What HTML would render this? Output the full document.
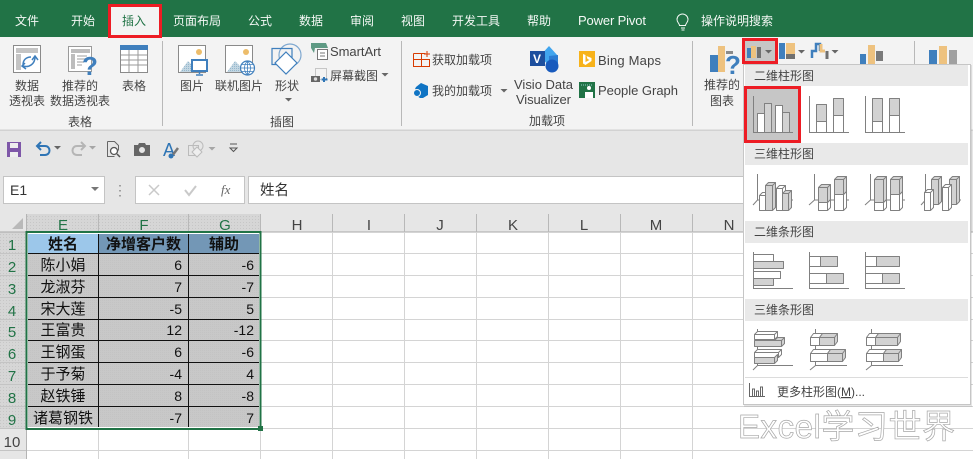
<!DOCTYPE html>
<html><head><meta charset="utf-8"><style>
html,body{margin:0;padding:0;background:#fff;width:973px;height:459px;overflow:hidden}
svg{display:block}
text{font-family:"Liberation Sans","Noto Sans CJK SC",sans-serif;font-size:12px;fill:#444}
.l{font-size:13px}
.c{font-size:15px;fill:#111;text-anchor:middle}
.b{font-weight:bold}
.n{font-size:14px;fill:#111;text-anchor:end}
.h{font-size:15px;fill:#444;text-anchor:middle}
.r{font-size:15px;fill:#217346;text-anchor:middle}
.w{fill:#f4f8f5}
.g{fill:#d2d2d2;stroke:#808080;stroke-width:1;stroke-linejoin:round}
.f{fill:#fff;stroke:#808080;stroke-width:1;stroke-linejoin:round}
.a{fill:none;stroke:#808080;stroke-width:1}
</style></head><body>
<svg width="973" height="459" viewBox="0 0 973 459" xmlns="http://www.w3.org/2000/svg">
<defs>
<pattern id="dot" width="3" height="3" patternUnits="userSpaceOnUse"><rect width="3" height="3" fill="#d6d6d6"/><rect width="1" height="1" fill="#c6c6c6"/></pattern>
<pattern id="cell" width="2" height="2" patternUnits="userSpaceOnUse"><rect width="2" height="2" fill="#c8c8c8"/><rect width="1" height="1" fill="#c3c3c3"/></pattern>
<pattern id="mt" width="2" height="2" patternUnits="userSpaceOnUse"><rect width="2" height="2" fill="#c3d6e2"/><rect width="1" height="1" fill="#95b8cd"/></pattern>
<path id="arr" d="M-3.500 0h7l-3.500 3.500z" fill="#666"/>
</defs>

<!-- base -->
<rect width="973" height="459" fill="#fff"/>
<rect y="130" width="973" height="102" fill="#e6e6e6"/>
<rect y="37" width="973" height="93" fill="#f3f3f3"/>
<rect y="129.500" width="973" height="1.500" fill="#d2d2d2"/>
<rect width="973" height="37" fill="#217346"/>

<!-- tabs -->
<rect x="109.500" y="5.500" width="51" height="31" fill="#f3f3f3" stroke="#ed1c24" stroke-width="3"/>
<text class="w" x="15" y="25">文件</text>
<text class="w" x="71" y="25">开始</text>
<text x="122" y="25" style="fill:#217346">插入</text>
<text class="w" x="173" y="25">页面布局</text>
<text class="w" x="248" y="25">公式</text>
<text class="w" x="299" y="25">数据</text>
<text class="w" x="350" y="25">审阅</text>
<text class="w" x="401" y="25">视图</text>
<text class="w" x="452" y="25">开发工具</text>
<text class="w" x="527" y="25">帮助</text>
<text class="w l" x="578" y="25" textLength="68">Power Pivot</text>
<text class="w" x="701" y="25">操作说明搜索</text>
<path d="M681 28h4M681.500 30h3M679.500 25.500c0-2-2.500-3-2.500-6a5.500 5.500 0 0 1 11 0c0 3-2.500 4-2.500 6z" fill="none" stroke="#f4f8f5" stroke-width="1"/>

<!-- ribbon labels -->
<text x="15" y="90">数据</text><text x="9" y="105">透视表</text>
<text x="62" y="90">推荐的</text><text x="50" y="105">数据透视表</text>
<text x="122" y="90">表格</text><text x="68" y="126">表格</text>
<rect x="162" y="41" width="1" height="85" fill="#b8b8b8"/>
<text x="180" y="90">图片</text><text x="215" y="90">联机图片</text><text x="275" y="90">形状</text>
<use href="#arr" x="288.500" y="98"/>
<text x="270" y="126">插图</text>
<text class="l" x="330" y="56" textLength="51">SmartArt</text>
<text x="330" y="80">屏幕截图</text><use href="#arr" x="385" y="73"/>
<rect x="401" y="41" width="1" height="85" fill="#b8b8b8"/>
<text x="432" y="64">获取加载项</text><text x="432" y="95">我的加载项</text><use href="#arr" x="504" y="89"/>
<text class="l" x="514" y="89" textLength="59">Visio Data</text><text class="l" x="516" y="104" textLength="55">Visualizer</text>
<text class="l" x="598" y="65" textLength="63">Bing Maps</text><text class="l" x="598" y="95" textLength="80">People Graph</text>
<text x="529" y="125">加载项</text>
<rect x="692" y="41" width="1" height="85" fill="#b8b8b8"/>
<text x="704" y="89">推荐的</text><text x="710" y="105">图表</text>

<!-- pivot icon -->
<rect x="13.500" y="45.500" width="27" height="27" fill="#fff" stroke="#8a8a8a"/>
<rect x="16" y="48" width="22" height="5" fill="#c4c4c4"/><rect x="16" y="54" width="5" height="16" fill="#c4c4c4"/>
<path d="M23 66c6 2 12-2 12-9M32 60l3-4 3 4M25 63l-3 3 4 3M23 65c0-5 3-8 8-8" fill="none" stroke="#3f7fbd" stroke-width="1.500"/>
<!-- recommended pivot -->
<rect x="68.500" y="46.500" width="23" height="25" fill="#fff" stroke="#9a9a9a"/>
<rect x="71" y="49" width="19" height="4" fill="#bdbdbd"/><rect x="71" y="54" width="4" height="15" fill="#bdbdbd"/>
<path d="M77 56h10M77 59h10M77 62h7M77 65h5" stroke="#bdbdbd" stroke-width="1.500"/>
<text x="82" y="75" style="font-size:26px;font-weight:bold;fill:#3f7fbd">?</text>
<!-- table icon -->
<rect x="120.500" y="45.500" width="27" height="27" fill="#fff" stroke="#8a8a8a"/>
<rect x="120" y="45" width="28" height="5" fill="#3f7fbd"/>
<path d="M121 55h26M121 60h26M121 65h26M129 50v22M138 50v22" stroke="#9a9a9a"/>
<!-- picture -->
<rect x="178.500" y="45.500" width="27" height="27" fill="#fff" stroke="#8a8a8a"/>
<circle cx="199" cy="52" r="3" fill="#edbd6b"/>
<path d="M180 72l8-11 5 5 3 6z" fill="url(#mt)"/>
<rect x="192" y="60" width="15" height="11" fill="#fff" stroke="#3f7fbd" stroke-width="2"/>
<path d="M199.500 71v3M196 75h7" stroke="#3f7fbd" stroke-width="1.500"/>
<!-- online -->
<rect x="225.500" y="45.500" width="27" height="27" fill="#fff" stroke="#8a8a8a"/>
<circle cx="246" cy="52" r="3" fill="#edbd6b"/>
<path d="M227 72l8-11 5 5 3 6z" fill="url(#mt)"/>
<circle cx="247.500" cy="68" r="7" fill="#fff" stroke="#3f7fbd" stroke-width="1.200"/>
<path d="M240.500 68h14M241.500 64.500h12M241.500 71.500h12M247.500 61v14M247.500 61c-4 4-4 10 0 14M247.500 61c4 4 4 10 0 14" fill="none" stroke="#3f7fbd" stroke-width=".8"/>
<!-- shapes -->
<circle cx="290" cy="55" r="11" fill="none" stroke="#7fa8d0" stroke-width="1.200"/>
<path d="M272 48.500h20v16h-20z" fill="none" stroke="#3f7fbd" stroke-width="1.200"/>
<path d="M286 52l11 11-11 11-11-11z" fill="#fff" stroke="#3f7fbd" stroke-width="1.200"/>
<!-- smartart -->
<path d="M311 43h15l2 5h-13l-1 5-3-5z" fill="#5f9a84"/>
<rect x="317.500" y="49.500" width="10" height="10" fill="#fff" stroke="#777"/><path d="M320 53h5M320 56h5" stroke="#777"/>
<!-- screenshot -->
<rect x="315.500" y="68.500" width="11" height="11" fill="none" stroke="#999" stroke-dasharray="1 1"/>
<rect x="311" y="76" width="9" height="6" fill="#666"/><circle cx="315.500" cy="79" r="1.700" fill="#ddd"/>
<path d="M324 77v5M321.500 79.500h6" stroke="#2f75b5" stroke-width="2"/>
<!-- get addins -->
<path d="M413.500 53.500h12M413.500 53.500v13h16v-7h-16M421.500 53.500v13" fill="none" stroke="#d83b01"/>
<path d="M427 51v6M424 54h6" stroke="#d83b01"/>
<!-- my addins -->
<path d="M421 83l7 3v9l-5 3h-3l-3-2v-6l-2-1 1-2z" fill="#0f74c4"/><circle cx="417" cy="93" r="3.500" fill="#0f74c4" stroke="#f3f3f3"/>
<!-- visio -->
<path d="M549 46l9 10-9 10-9-10z" fill="#41a5ee"/><path d="M549 56l9-1v9h-9z" fill="#2b7cd3"/>
<circle cx="552" cy="66" r="6.500" fill="#185abd"/>
<rect x="530" y="51" width="15" height="15" fill="#1d4f9e"/>
<text x="533" y="63" style="font-size:12px;font-weight:bold;fill:#fff">V</text>
<!-- bing -->
<rect x="579" y="51" width="16" height="16" fill="#f7b21a"/>
<path d="M583 54l2.500 1v7l4-2-2-1-1-3 5 2v3l-6 4-2.500-1.500z" fill="#fff"/>
<!-- people graph -->
<rect x="579" y="82" width="16" height="16" fill="#217346"/>
<circle cx="589" cy="88" r="2" fill="#fff"/><path d="M585 98v-6h8v6z" fill="#fff"/><path d="M581 85h12" stroke="#9cc" stroke-dasharray="1 1"/>
<!-- recommended chart -->
<rect x="710" y="55" width="8" height="17" fill="#3f7fbd"/>
<rect x="718" y="46" width="7" height="26" fill="#eec27f"/>
<rect x="726" y="51" width="7" height="3" fill="#8a8a8a"/>
<text x="725" y="74" style="font-size:26px;font-weight:bold;fill:#3f7fbd">?</text>

<!-- top chart group -->
<rect x="743.500" y="39.500" width="33" height="23" fill="#c6c6c6" stroke="#ed1c24" stroke-width="3"/>
<rect x="747" y="48" width="4" height="10" fill="#3f7fbd"/><rect x="751" y="46" width="5" height="12" fill="#eec27f"/><rect x="757" y="47" width="4" height="11" fill="#707070"/>
<use href="#arr" x="768.500" y="50"/>
<rect x="779" y="43" width="6" height="16" fill="#3f7fbd"/><rect x="786" y="43" width="9" height="11" fill="#eec27f"/><rect x="786" y="54" width="9" height="5" fill="#707070"/>
<use href="#arr" x="801.500" y="50"/>
<path d="M812 58v-7h4v-7h4v7" fill="none" stroke="#3f7fbd" stroke-width="2.500"/><path d="M821 44v7h4" fill="none" stroke="#eec27f" stroke-width="3"/><path d="M827 51v8" stroke="#707070" stroke-width="3"/>
<use href="#arr" x="835" y="50"/>
<rect x="860" y="54" width="6" height="12" fill="#3f7fbd"/><rect x="868" y="45" width="7" height="21" fill="#eec27f"/><rect x="876" y="51" width="7" height="10" fill="#7a7a7a"/>
<rect x="914" y="41" width="1" height="85" fill="#b8b8b8"/>
<rect x="929" y="50" width="8" height="18" fill="#3f7fbd"/><rect x="939" y="46" width="8" height="22" fill="#eec27f"/><rect x="949" y="50" width="8" height="18" fill="#a0a0a0"/>

<!-- QAT -->
<rect x="7" y="142" width="14" height="15" fill="#7e57a8"/><rect x="10" y="143" width="8" height="5" fill="#eee"/><rect x="10" y="152" width="8" height="5" fill="#eee"/>
<path d="M37 146h8c6 0 6 9 0 9h-5M41 142l-4 4 4 4" fill="none" stroke="#2f75b5" stroke-width="2"/>
<use href="#arr" x="57.500" y="146"/>
<path d="M85 146h-8c-6 0-6 9 0 9h5M81 142l4 4-4 4" fill="none" stroke="#b5b5b5" stroke-width="2"/>
<use href="#arr" x="92.500" y="146" style="opacity:.5"/>
<path d="M107.500 141.500h7l4 4v5M107.500 141.500v15h7" fill="none" stroke="#666"/><circle cx="114" cy="151" r="3.500" fill="#fff" stroke="#555" stroke-width="1.300"/><path d="M117 154l3 3" stroke="#555" stroke-width="1.500"/>
<path d="M134 145h4l1-2h6l1 2h4v11h-16z" fill="#666"/><circle cx="142" cy="150" r="3.500" fill="#e6e6e6" stroke="#666"/>
<text x="163" y="156" style="font-size:18px;fill:#2f75b5">A</text><path d="M172 156l6-8" stroke="#777" stroke-width="2.500"/><circle cx="171" cy="156" r="2.500" fill="#2f75b5"/>
<rect x="188.500" y="145.500" width="10" height="10" fill="none" stroke="#bbb"/><circle cx="198" cy="146" r="5" fill="none" stroke="#bbb"/><path d="M197 147l5 5-5 5-5-5z" fill="#eee" stroke="#bbb"/>
<use href="#arr" x="212" y="147" style="opacity:.5"/>
<path d="M230 144h7M230 148h7l-3.500 3.500z" fill="none" stroke="#555"/>

<!-- formula bar -->
<rect x="3.500" y="176.500" width="101" height="27" fill="#fff" stroke="#c4c4c4"/>
<text x="10" y="195" style="font-size:14px;fill:#333">E1</text>
<path d="M91 187h8l-4 4z" fill="#777"/>
<path d="M120 185v1.500M120 190v1.500M120 195v1.500" stroke="#888" stroke-width="1.500"/>
<rect x="135.500" y="176.500" width="109" height="27" fill="#fff" stroke="#c4c4c4"/>
<path d="M149 185l10 10M159 185l-10 10" stroke="#c9c9c9" stroke-width="1.500"/>
<path d="M185 190l4 5 7-9" fill="none" stroke="#c9c9c9" stroke-width="2"/>
<text x="221" y="194" style="font-family:'Liberation Serif',serif;font-style:italic;font-size:13px;fill:#666">fx</text>
<rect x="248.500" y="176.500" width="500" height="27" fill="#fff" stroke="#c4c4c4"/>
<text x="260" y="195" style="font-size:14.500px;fill:#333">姓名</text>

<!-- sheet headers -->
<rect x="0" y="214" width="973" height="18" fill="#e6e6e6"/>
<rect x="27" y="214" width="234" height="18" fill="url(#dot)"/>
<rect x="0" y="232" width="26" height="197" fill="url(#dot)"/>
<rect x="0" y="429" width="26" height="30" fill="#e6e6e6"/>
<rect y="231.500" width="973" height="1" fill="#a8a8a8"/>
<rect x="26" y="214" width="1" height="245" fill="#b4b4b4"/>
<path d="M98.500 214v18M188.500 214v18M260.500 214v18M332.500 214v18M404.500 214v18M476.500 214v18M548.500 214v18M620.500 214v18M692.500 214v18" stroke="#b8b8b8"/>
<path d="M23 218v11h-11z" fill="#b9b9b9"/>
<text class="r" x="63" y="230">E</text><text class="r" x="144" y="230">F</text><text class="r" x="225" y="230">G</text>
<text class="h" x="297" y="230">H</text><text class="h" x="369" y="230">I</text><text class="h" x="440" y="230">J</text><text class="h" x="513" y="230">K</text><text class="h" x="584" y="230">L</text><text class="h" x="656" y="230">M</text><text class="h" x="729" y="230">N</text>

<!-- grid -->
<path d="M261 253.500H973M261 275.500H973M261 297.500H973M261 319.500H973M261 340.500H973M261 362.500H973M261 384.500H973M261 406.500H973M261 428.500H973M27 450.500H973M98.500 430V459M188.500 430V459M260.500 430V459M332.500 232V459M404.500 232V459M476.500 232V459M548.500 232V459M620.500 232V459M692.500 232V459" stroke="#d4d4d4"/>
<path d="M0 253.500H26M0 275.500H26M0 297.500H26M0 319.500H26M0 340.500H26M0 362.500H26M0 384.500H26M0 406.500H26M0 428.500H26M0 450.500H26" stroke="#c4c4c4"/>

<!-- table -->
<rect x="28" y="234" width="231" height="194" fill="#fff"/>
<rect x="28" y="234" width="70" height="19" fill="#9cc7ea"/>
<rect x="99" y="234" width="160" height="19" fill="#7397b6"/>
<rect x="28" y="254" width="231" height="173" fill="url(#cell)"/>
<path d="M28 253.500H259M28 275.500H259M28 297.500H259M28 319.500H259M28 340.500H259M28 362.500H259M28 384.500H259M28 406.500H259M98.500 234V427M188.500 234V427" stroke="#111"/>
<text class="c b" x="63" y="249">姓名</text><text class="c b" x="143.500" y="249">净增客户数</text><text class="c b" x="224" y="249">辅助</text>
<text class="c" x="63" y="270">陈小娟</text><text class="n" x="182" y="270">6</text><text class="n" x="254" y="270">-6</text>
<text class="c" x="63" y="292">龙淑芬</text><text class="n" x="182" y="292">7</text><text class="n" x="254" y="292">-7</text>
<text class="c" x="63" y="314">宋大莲</text><text class="n" x="182" y="314">-5</text><text class="n" x="254" y="314">5</text>
<text class="c" x="63" y="335">王富贵</text><text class="n" x="182" y="335">12</text><text class="n" x="254" y="335">-12</text>
<text class="c" x="63" y="357">王钢蛋</text><text class="n" x="182" y="357">6</text><text class="n" x="254" y="357">-6</text>
<text class="c" x="63" y="379">于予菊</text><text class="n" x="182" y="379">-4</text><text class="n" x="254" y="379">4</text>
<text class="c" x="63" y="401">赵铁锤</text><text class="n" x="182" y="401">8</text><text class="n" x="254" y="401">-8</text>
<text class="c" x="63" y="423">诸葛钢铁</text><text class="n" x="182" y="423">-7</text><text class="n" x="254" y="423">7</text>
<rect x="26.500" y="232" width="234" height="197" fill="none" stroke="#217346" stroke-width="2"/>
<rect x="258" y="426" width="5" height="5" fill="#217346"/>
<text class="r" x="12" y="250">1</text><text class="r" x="12" y="272">2</text><text class="r" x="12" y="294">3</text><text class="r" x="12" y="316">4</text><text class="r" x="12" y="337">5</text><text class="r" x="12" y="359">6</text><text class="r" x="12" y="381">7</text><text class="r" x="12" y="403">8</text><text class="r" x="12" y="425">9</text>
<text class="h" x="12" y="447">10</text>

<!-- watermark -->
<text x="738" y="438" textLength="217" style="font-size:33px;fill:#fff;stroke:#a8a8a8;stroke-width:.7">Excel学习世界</text>

<!-- menu -->
<rect x="744" y="65" width="228" height="342" fill="#999" opacity=".25"/>
<rect x="743.500" y="64.500" width="227" height="340" fill="#fff" stroke="#c6c6c6"/>
<rect x="745" y="65" width="223" height="21" fill="#e9e9e9"/>
<rect x="745" y="143" width="223" height="22" fill="#e9e9e9"/>
<rect x="745" y="221" width="223" height="22" fill="#e9e9e9"/>
<rect x="745" y="299" width="223" height="22" fill="#e9e9e9"/>
<text x="754" y="80">二维柱形图</text><text x="754" y="158">三维柱形图</text><text x="754" y="236">二维条形图</text><text x="754" y="314">三维条形图</text>
<rect x="745.500" y="87.500" width="54" height="54" fill="#c6c6c6" stroke="#ed1c24" stroke-width="3"/>

<!-- 2D columns -->
<path class="a" d="M753.500 96v36.500H793"/>
<rect class="f" x="757.500" y="113.500" width="7" height="19"/><rect class="g" x="764.500" y="103.500" width="7" height="29"/><rect class="f" x="775.500" y="105.500" width="7" height="27"/><rect class="g" x="782.500" y="112.500" width="7" height="20"/>
<path class="a" d="M809.500 96v36.500H849"/>
<rect class="f" x="816.500" y="121.500" width="10" height="11"/><rect class="g" x="816.500" y="104.500" width="10" height="17"/><rect class="f" x="833.500" y="115.500" width="10" height="17"/><rect class="g" x="833.500" y="98.500" width="10" height="17"/>
<path class="a" d="M865.500 96v36.500H905"/>
<rect class="f" x="872.500" y="121.500" width="10" height="11"/><rect class="g" x="872.500" y="98.500" width="10" height="23"/><rect class="f" x="889.500" y="115.500" width="10" height="17"/><rect class="g" x="889.500" y="98.500" width="10" height="17"/>

<!-- 3D columns -->
<path class="a" d="M757.500 174v26M753 205l4.500-5H793"/>
<path class="f" d="M759.500 195.500h6v15h-6zM759.500 195.500l3-3h6l-3 3zM765.500 195.500l3-3v15l-3 3z"/>
<path class="g" d="M765.500 185.500h7v25h-7zM765.500 185.500l3-3h7l-3 3zM772.500 185.500l3-3v25l-3 3z"/>
<path class="f" d="M776.500 188.500h6v22h-6zM776.500 188.500l3-3h6l-3 3zM782.500 188.500l3-3v22l-3 3z"/>
<path class="g" d="M782.500 193.500h6v17h-6zM782.500 193.500l3-3h6l-3 3zM788.500 193.500l3-3v17l-3 3z"/>

<path class="a" d="M814.500 174v26M809 205l5.500-5H849"/>
<path class="f" d="M818.500 202.500h9v8h-9zM827.500 202.500l3-3v8l-3 3z"/>
<path class="g" d="M818.500 187.500h9v15h-9zM818.500 187.500l3-3h9l-3 3zM827.500 187.500l3-3v15l-3 3z"/>
<path class="f" d="M834.500 194.500h9v16h-9zM843.500 194.500l3-3v16l-3 3z"/>
<path class="g" d="M834.500 179.500h9v15h-9zM834.500 179.500l3-3h9l-3 3zM843.500 179.500l3-3v15l-3 3z"/>

<path class="a" d="M870.500 174v26M865 205l5.500-5H905"/>
<path class="f" d="M874.500 202.500h9v8h-9zM883.500 202.500l3-3v8l-3 3z"/>
<path class="g" d="M874.500 179.500h9v23h-9zM874.500 179.500l3-3h9l-3 3zM883.500 179.500l3-3v23l-3 3z"/>
<path class="f" d="M890.500 194.500h9v16h-9zM899.500 194.500l3-3v16l-3 3z"/>
<path class="g" d="M890.500 179.500h9v15h-9zM890.500 179.500l3-3h9l-3 3zM899.500 179.500l3-3v15l-3 3z"/>

<path class="a" d="M925.500 174v26M921 205l4.500-5H961"/>
<path class="g" d="M931.500 179.500h7v25h-7zM931.500 179.500l3-3h7l-3 3zM938.500 179.500l3-3v25l-3 3z"/>
<path class="f" d="M924.500 192.500h6v18h-6zM924.500 192.500l3-3h6l-3 3zM930.500 192.500l3-3v18l-3 3z"/>
<path class="g" d="M949.500 179.500h7v25h-7zM949.500 179.500l3-3h7l-3 3zM956.500 179.500l3-3v25l-3 3z"/>
<path class="f" d="M942.500 187.500h6v23h-6zM942.500 187.500l3-3h6l-3 3zM948.500 187.500l3-3v23l-3 3z"/>

<!-- 2D bars -->
<path class="a" d="M753.500 252v36.500H793"/>
<rect class="f" x="753.500" y="254.500" width="20" height="7"/><rect class="g" x="753.500" y="261.500" width="30" height="7"/><rect class="f" x="753.500" y="271.500" width="27" height="7"/><rect class="g" x="753.500" y="278.500" width="20" height="7"/>
<path class="a" d="M809.500 252v36.500H849"/>
<rect class="f" x="809.500" y="256.500" width="11" height="10"/><rect class="g" x="820.500" y="256.500" width="17" height="10"/><rect class="f" x="809.500" y="273.500" width="17" height="10"/><rect class="g" x="826.500" y="273.500" width="17" height="10"/>
<path class="a" d="M865.500 252v36.500H905"/>
<rect class="f" x="865.500" y="256.500" width="11" height="10"/><rect class="g" x="876.500" y="256.500" width="23" height="10"/><rect class="f" x="865.500" y="273.500" width="17" height="10"/><rect class="g" x="882.500" y="273.500" width="17" height="10"/>

<!-- 3D bars -->
<path class="a" d="M757.500 329v36.500H793M753 370l4.500-4.500"/>
<path class="f" d="M754.500 334.500h20v5h-20zM754.500 334.500l3-3h20l-3 3zM774.500 334.500l3-3v5l-3 3z"/>
<path class="g" d="M754.500 340.500h27v6h-27zM774.500 340.500l3-3h7l-3 3zM781.500 340.500l3-3v6l-3 3z"/>
<path class="f" d="M754.500 352.500h24v5h-24zM754.500 352.500l3-3h24l-3 3zM778.500 352.500l3-3v5l-3 3z"/>
<path class="g" d="M754.500 357.500h20v6h-20zM774.500 357.500l3-3v6l-3 3z"/>

<path class="a" d="M815.500 329v36.500H847M810 370l5.500-4.500"/>
<path class="f" d="M810.500 337.500h9v8h-9zM810.500 337.500l3-4h9l-3 4z"/>
<path class="g" d="M819.500 337.500h15v8h-15zM819.500 337.500l3-4h15l-3 4zM834.500 337.500l3-4v8l-3 4z"/>
<path class="f" d="M810.500 353.500h17v8h-17zM810.500 353.500l3-4h17l-3 4z"/>
<path class="g" d="M827.500 353.500h15v8h-15zM827.500 353.500l3-4h15l-3 4zM842.500 353.500l3-4v8l-3 4z"/>

<path class="a" d="M871.500 329v36.500H903M866 370l5.500-4.500"/>
<path class="f" d="M866.500 337.500h9v8h-9zM866.500 337.500l3-4h9l-3 4z"/>
<path class="g" d="M875.500 337.500h22v8h-22zM875.500 337.500l3-4h22l-3 4zM897.500 337.500l3-4v8l-3 4z"/>
<path class="f" d="M866.500 353.500h17v8h-17zM866.500 353.500l3-4h17l-3 4z"/>
<path class="g" d="M883.500 353.500h15v8h-15zM883.500 353.500l3-4h15l-3 4zM898.500 353.500l3-4v8l-3 4z"/>

<rect x="745" y="377" width="223" height="1" fill="#dcdcdc"/>
<path d="M749.500 383v13.500H765M752.500 396v-7h2v7M756.500 396v-5h2v5M760.500 396v-9h2v9" fill="none" stroke="#666"/>
<text x="777" y="396" style="fill:#444">更多柱形图(<tspan text-decoration="underline">M</tspan>)...</text>
</svg>
</body></html>
